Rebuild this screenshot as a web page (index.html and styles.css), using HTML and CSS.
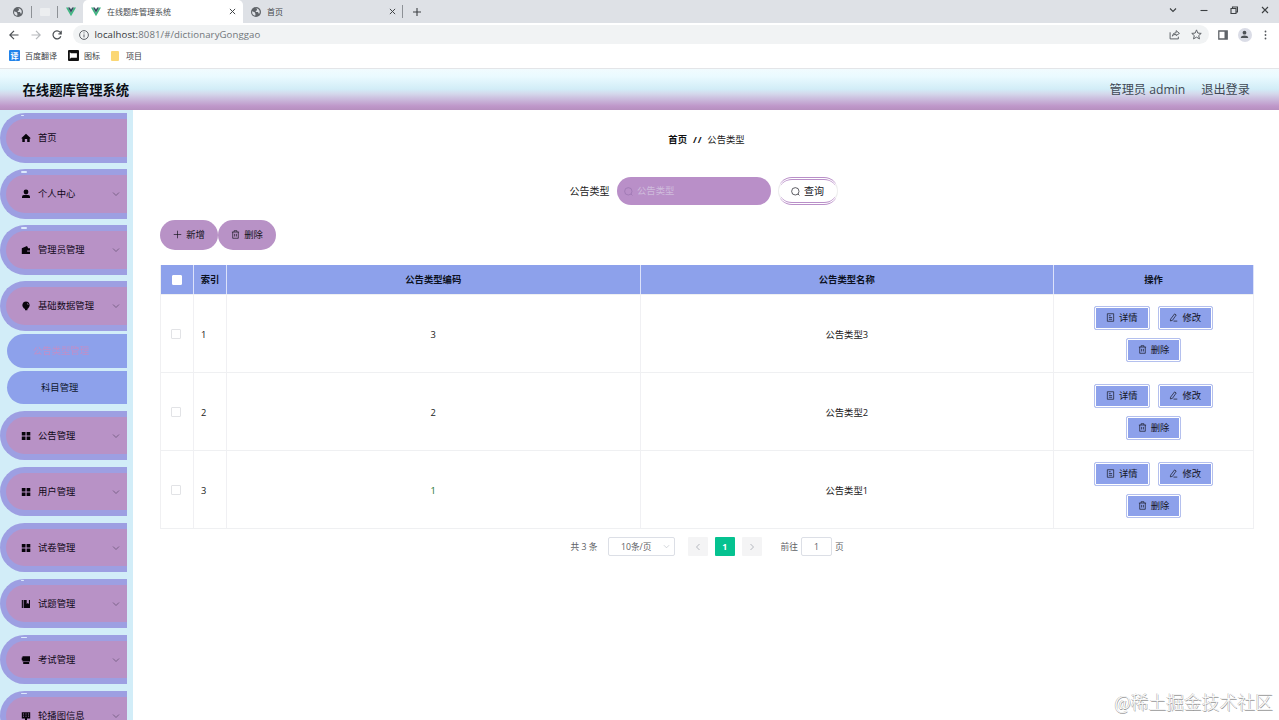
FILE: index.html
```html
<!DOCTYPE html>
<html lang="zh-CN">
<head>
<meta charset="utf-8">
<title>在线题库管理系统</title>
<link rel="stylesheet" href="styles.css">
</head>
<body>
<svg class="defs" width="0" height="0">
  <symbol id="globe" viewBox="0 0 10 10"><circle cx="5" cy="5" r="5" fill="#5f6368"/><path d="M1.2 4.2 3.7 5.2 4.5 6.9 4.2 8.7A3.9 3.9 0 0 1 1.2 4.2M4.5 1.2 6 2 5.8 3.4 4.6 4 5 5 7 5 7.6 6.4 8.4 6.5A4 4 0 0 0 7 1.8Z" fill="#dee1e6"/></symbol>
  <symbol id="vue" viewBox="0 0 10 9"><path d="M0 0h2L5 5.2 8 0h2L5 8.8Z" fill="#41b883"/><path d="M2 0h1.8L5 2 6.2 0H8L5 5.2Z" fill="#35495e"/></symbol>
  <symbol id="cross" viewBox="0 0 8 8"><path d="m1 1 6 6M7 1 1 7"/></symbol>
  <symbol id="down" viewBox="0 0 8 8"><path d="m1 2.5 3 3 3-3"/></symbol>
  <symbol id="house" viewBox="0 0 10 10"><path d="M5 .8 9.5 5v.6H8.7V9H6.2V6H3.8v3H1.3V5.6H.5V5Z" fill="#08040c"/></symbol>
  <symbol id="user" viewBox="0 0 10 10"><circle cx="5" cy="3" r="2.4" fill="#08040c"/><path d="M1 9V7.5Q1 6 2.8 6h4.4Q9 6 9 7.5V9Z" fill="#08040c"/></symbol>
  <symbol id="wallet" viewBox="0 0 10 10"><path d="M.8 3.2 6 1l1.2 2.2H9v2H6.5v1.7H9V9H.8Z" fill="#08040c"/><circle cx="8" cy="6" r=".8" fill="#08040c"/></symbol>
  <symbol id="bulb" viewBox="0 0 10 10"><path d="M5 .6a3.7 3.7 0 0 1 2.3 6.6L6.4 8v1.3H4V8L2.7 7.2A3.7 3.7 0 0 1 5 .6" fill="#08040c"/><path d="M6 2.2q1.2.5 1.2 1.8" fill="none" stroke="#b892c6" stroke-width=".6"/></symbol>
  <symbol id="grid4" viewBox="0 0 10 10"><path d="M.8 1h3.7v3.5H.8zM5.6 1h3.7v3.5H5.6zM.8 5.5h3.7V9H.8zM5.6 5.5h3.7V9H5.6z" fill="#08040c"/></symbol>
  <symbol id="book" viewBox="0 0 10 10"><path d="M.8 1h1.1v8H.8zM2.6 1h3.1v4l1.1-1 1.1 1V1H9v8H2.6z" fill="#08040c"/></symbol>
  <symbol id="cup" viewBox="0 0 10 10"><path d="M1.5 1.2H9v5.3H1.5zM.7 2.4h1v2.8h-1zM2.2 7h6v2h-6z" fill="#08040c"/></symbol>
  <symbol id="film" viewBox="0 0 10 10"><path d="M.8 1.2h8.4v6.3H6v1.4H4V7.5H.8z" fill="#08040c"/><path d="M2 3h1M4.5 3h1M7 3h1M2 5.2h1M4.5 5.2h1M7 5.2h1" stroke="#b892c6" stroke-width=".8"/></symbol>
  <symbol id="search" viewBox="0 0 10 10"><circle cx="4.8" cy="4.8" r="4.1"/><path d="m7.7 7.7 1.7 1.7"/></symbol>
  <symbol id="trash" viewBox="0 0 10 10"><path d="M1 2.3h8M3.4 2.2V.8h3.2v1.4M1.9 2.3v6.9h6.2V2.3M4 4.3v2.9M6 4.3v2.9"/></symbol>
  <symbol id="doc" viewBox="0 0 10 10"><path d="M1.5.8h7v8.4h-7zM3.2 3h2M3.2 5h3.6M3.2 7h3.6"/></symbol>
  <symbol id="edit" viewBox="0 0 10 10"><path d="M6.2 1 8 2.2 3.8 8.2 1.5 8.8 1.8 6.8ZM5 9h4.2"/></symbol>
</svg>

<div class="tabs">
  <span class="pin pin1"><svg class="i10"><use href="#globe"/></svg></span>
  <span class="pin pin2"><i class="blank"></i></span>
  <span class="pin pin3"><svg class="i10"><use href="#vue"/></svg></span>
  <div class="tab active"><svg class="i10"><use href="#vue"/></svg><span>在线题库管理系统</span><svg class="x line"><use href="#cross"/></svg></div>
  <div class="tab"><svg class="i10"><use href="#globe"/></svg><span>首页</span><svg class="x line"><use href="#cross"/></svg></div>
  <i class="sep"></i>
  <svg class="plus line" viewBox="0 0 8 8"><path d="M4 0v8M0 4h8"/></svg>
  <div class="win">
    <svg class="line" viewBox="0 0 8 8"><use href="#down"/></svg>
    <svg class="line" viewBox="0 0 8 8"><path d="M.5 4.5h7"/></svg>
    <svg class="line" viewBox="0 0 8 8"><path d="M1 2.5h5v5H1zM2.5 2.5V1h5v5H6"/></svg>
    <svg class="line" viewBox="0 0 8 8"><use href="#cross"/></svg>
  </div>
</div>
<div class="toolbar">
  <svg class="nav" viewBox="0 0 10 10"><path d="M9.5 5H1M5 .8.8 5 5 9.2"/></svg>
  <svg class="nav dim" viewBox="0 0 10 10"><path d="M.5 5H9M5 .8 9.2 5 5 9.2"/></svg>
  <svg class="nav" viewBox="0 0 10 10"><path d="M8.8 6.2A4 4 0 1 1 8 2.2L9 3.4M9.2.8v3H6.4"/></svg>
  <div class="address">
    <svg class="info" viewBox="0 0 10 10"><circle cx="5" cy="5" r="4.4"/><path d="M5 4.4v3M5 2.4v1"/></svg>
    <span class="url"><b>localhost:</b>8081/#/dictionaryGonggao</span>
    <svg class="addricon share" viewBox="0 0 10 10"><path d="M1 3v6h7.5V7M3 6.5Q3.5 3.3 6.5 3.3V1.5L9.5 4 6.5 6V4.8Q4 4.8 3 6.5Z"/></svg>
    <svg class="addricon" viewBox="0 0 10 10"><path d="m5 .8 1.2 2.9 3.1.3L7 6l.7 3L5 7.4 2.3 9 3 6 .7 4l3.1-.3Z"/></svg>
  </div>
  <svg class="panel" viewBox="0 0 10 10"><path d="M.8 1h8.4v8H.8z" fill="none" stroke="#5f6368" stroke-width="1.3"/><path d="M6.5 1h2.7v8H6.5z" fill="#5f6368"/></svg>
  <span class="avatar"><svg viewBox="0 0 10 10"><circle cx="5" cy="3" r="2.1"/><path d="M1 9V7.8Q1.5 6 5 6t4 1.8V9Z"/></svg></span>
  <svg class="dots" viewBox="0 0 3 10"><circle cx="1.5" cy="1.5" r=".9"/><circle cx="1.5" cy="5" r=".9"/><circle cx="1.5" cy="8.5" r=".9"/></svg>
</div>
<div class="bookmarks">
  <span class="bm"><i class="yi">译</i>百度翻译</span>
  <span class="bm"><svg class="bmi" viewBox="0 0 11 11"><rect width="11" height="11" rx="1" fill="#111"/><path d="M1.8 2.2 3 3.2h5.9v4.6H3L1.8 9Z" fill="#fff"/></svg>图标</span>
  <span class="bm"><i class="folder"></i>项目</span>
</div>

<header class="header">
  <h1>在线题库管理系统</h1>
  <span class="who">管理员 admin</span>
  <span>退出登录</span>
</header>

<div class="body">
  <nav class="side">
    <div class="item tick small"><svg><use href="#house"/></svg><span>首页</span></div>
    <div class="item tick"><svg><use href="#user"/></svg><span>个人中心</span><svg class="arr"><use href="#down"/></svg></div>
    <div class="item tick"><svg><use href="#wallet"/></svg><span>管理员管理</span><svg class="arr"><use href="#down"/></svg></div>
    <div class="item"><svg><use href="#bulb"/></svg><span>基础数据管理</span><svg class="arr"><use href="#down"/></svg></div>
    <div class="subs">
      <div class="sub current">公告类型管理</div>
      <div class="sub">科目管理</div>
    </div>
    <div class="item"><svg><use href="#grid4"/></svg><span>公告管理</span><svg class="arr"><use href="#down"/></svg></div>
    <div class="item"><svg><use href="#grid4"/></svg><span>用户管理</span><svg class="arr"><use href="#down"/></svg></div>
    <div class="item"><svg><use href="#grid4"/></svg><span>试卷管理</span><svg class="arr"><use href="#down"/></svg></div>
    <div class="item tick small"><svg><use href="#book"/></svg><span>试题管理</span><svg class="arr"><use href="#down"/></svg></div>
    <div class="item tick"><svg><use href="#cup"/></svg><span>考试管理</span><svg class="arr"><use href="#down"/></svg></div>
    <div class="item tick"><svg><use href="#film"/></svg><span>轮播图信息</span><svg class="arr"><use href="#down"/></svg></div>
  </nav>

  <main class="main">
    <div class="crumb"><b>首页</b><b class="slash">//</b><span>公告类型</span></div>
    <div class="filter">
      <label>公告类型</label>
      <div class="field"><svg class="ico"><use href="#search"/></svg>公告类型</div>
      <button class="query"><svg class="ico"><use href="#search"/></svg>查询</button>
    </div>
    <div class="actions">
      <button class="pill"><svg class="ico" viewBox="0 0 10 10"><path d="M5 .8v8.4M.8 5h8.4"/></svg>新增</button>
      <button class="pill"><svg class="ico"><use href="#trash"/></svg>删除</button>
    </div>
    <div class="table">
      <div class="row head"><div class="c"><i class="box"></i></div><div class="c">索引</div><div class="c">公告类型编码</div><div class="c">公告类型名称</div><div class="c">操作</div></div>
      <div class="row"><div class="c"><i class="box"></i></div><div class="c idx">1</div><div class="c">3</div><div class="c">公告类型3</div>
        <div class="c ops"><button><svg class="ico"><use href="#doc"/></svg>详情</button><button><svg class="ico"><use href="#edit"/></svg>修改</button><button><svg class="ico"><use href="#trash"/></svg>删除</button></div></div>
      <div class="row"><div class="c"><i class="box"></i></div><div class="c idx">2</div><div class="c">2</div><div class="c">公告类型2</div>
        <div class="c ops"><button><svg class="ico"><use href="#doc"/></svg>详情</button><button><svg class="ico"><use href="#edit"/></svg>修改</button><button><svg class="ico"><use href="#trash"/></svg>删除</button></div></div>
      <div class="row"><div class="c"><i class="box"></i></div><div class="c idx">3</div><div class="c green">1</div><div class="c">公告类型1</div>
        <div class="c ops"><button><svg class="ico"><use href="#doc"/></svg>详情</button><button><svg class="ico"><use href="#edit"/></svg>修改</button><button><svg class="ico"><use href="#trash"/></svg>删除</button></div></div>
    </div>
    <div class="pager">
      <span class="total">共 3 条</span>
      <span class="size">10条/页<svg class="arr"><use href="#down"/></svg></span>
      <span class="pg prev"><svg viewBox="0 0 8 8"><path d="M5.5 1 2.5 4l3 3"/></svg></span>
      <span class="pg on">1</span>
      <span class="pg"><svg viewBox="0 0 8 8"><path d="m2.5 1 3 3-3 3"/></svg></span>
      <span class="goto">前往</span><span class="num">1</span><span>页</span>
    </div>
  </main>
</div>
<div class="watermark">@稀土掘金技术社区</div>
</body>
</html>
```
FILE: styles.css
```css
* { box-sizing: border-box; }
body { margin: 0; width: 1279px; height: 720px; overflow: hidden; position: relative; background: #fff; color: #222; font: 9.33px/14px "Open Sans", "Noto Sans CJK SC", sans-serif; }
svg { flex: none; }
i { font-style: normal; }
button { font: inherit; color: #14141c; border: 0; margin: 0; padding: 0; display: flex; align-items: center; justify-content: center; }
.defs { position: absolute; }
.line { fill: none; stroke: #3c4043; stroke-width: 1.1; }

/* Browser chrome */
.tabs { height: 23px; background: #dee1e6; display: flex; align-items: center; font-size: 8px; color: #45494d; }
.i10 { width: 10px; height: 10px; }
.pin { display: flex; align-items: center; height: 12px; }
.pin1 { width: 32px; padding-left: 13px; border-right: 1px solid #8d9196; }
.pin2 { width: 26px; padding-left: 8px; border-right: 1px solid #8d9196; }
.pin3 { width: 25px; padding-left: 8px; }
.blank { width: 10px; height: 8px; background: #eceef0; border-radius: 1px; }
.tab { width: 160px; height: 23px; padding: 0 7px 0 8px; display: flex; align-items: center; gap: 6px; }
.tab.active { background: #fff; border-radius: 5px 5px 0 0; }
.tab .x { width: 7px; height: 7px; margin-left: auto; }
.sep { width: 1px; height: 13px; margin-left: -1px; background: #8d9196; }
.plus { width: 8px; height: 8px; margin-left: 10px; }
.win { margin-left: auto; display: flex; gap: 22.7px; padding: 0 10px 4px 0; }
.win svg { width: 8px; height: 8px; }
.toolbar { height: 23px; display: flex; align-items: center; padding-left: 9px; background: #fff; }
.nav { width: 10px; height: 10px; margin-right: 11.5px; fill: none; stroke: #4a4e52; stroke-width: 1.2; }
.nav.dim { stroke: #b5b8bb; }
.address { width: 1136px; height: 19px; margin-left: -1px; background: #f1f3f4; border-radius: 10px; display: flex; align-items: center; padding: 0 7px 0 6px; }
.info { width: 10px; height: 10px; fill: none; stroke: #5f6368; stroke-width: 1; margin-right: 6px; }
.url { font-size: 9.6px; letter-spacing: .1px; color: #70757a; margin-right: auto; }
.url b { font-weight: 400; color: #33363a; }
.addricon { width: 11px; height: 11px; fill: none; stroke: #5f6368; stroke-width: .9; }
.share { margin-right: 11px; }
.panel { width: 10px; height: 10px; margin-left: 9px; }
.avatar { width: 14px; height: 14px; border-radius: 50%; background: #dadce6; margin-left: 10px; display: flex; align-items: center; justify-content: center; }
.avatar svg { width: 9px; height: 9px; fill: #4d5156; }
.dots { width: 3px; height: 10px; fill: #55595e; margin-left: 12.5px; }
.bookmarks { height: 23px; padding: 0 0 3px 9px; display: flex; align-items: center; gap: 10px; border-bottom: 1px solid #e3e5e8; font-size: 8px; color: #3c4043; }
.bm { display: flex; align-items: center; gap: 5px; }
.yi { width: 11px; height: 11px; background: #2283ea; color: #fff; border-radius: 1px; line-height: 11px; font-size: 8px; font-weight: 700; text-align: center; }
.bmi { width: 11px; height: 11px; margin-left: 1px; }
.folder { width: 8px; height: 10px; background: #fbd775; border-radius: 1px; margin: 0 2px 0 1px; }

/* Application header */
.header { height: 41px; display: flex; align-items: center; padding: 1px 29px 0 22.5px; background: linear-gradient(#f1fbfe 0%, #eafaff 18%, #d2edf7 49%, #d4d9ec 60%, #bf98ca 90%, #b68fbf 100%); font-size: 12.2px; color: #3f4854; }
.header h1 { margin: 0 auto 0 0; font: 700 13.33px/20px "Open Sans", "Noto Sans CJK SC", sans-serif; color: #0a0e14; }
.who { margin-right: 16px; }

.body { display: flex; height: 610px; }
.side { width: 133px; height: 610px; overflow: hidden; padding-top: 3.3px; background: #d2edf8; flex: none; }
.item { position: relative; width: 127px; height: 49.4px; margin-bottom: 6.6px; border: 6px solid #9d9fe2; border-right: 0; border-radius: 25px 0 0 25px; background: #b892c6; display: flex; align-items: center; padding-left: 15px; color: #100818; }
.item svg { width: 10px; height: 10px; margin-right: 7px; }
.item .arr { width: 8px; height: 8px; margin: 0 7px 0 auto; }
.arr { fill: none; stroke: #695578; stroke-width: .8; }
.tick::before { content: ""; position: absolute; left: 15px; top: -4px; width: 6px; height: 1.5px; background: #dce9fb; border-radius: 1px; }
.small::before { top: -4.5px; width: 3px; height: 1px; }
.subs { margin: -3px 0 6.6px 7px; display: flex; flex-direction: column; gap: 3.4px; }
.sub { width: 120px; height: 33.4px; border-radius: 17px 0 0 17px; background: #8da1eb; padding-left: 34px; line-height: 33px; color: #101830; }
.current { padding-left: 26px; color: #c08fc8; filter: blur(.6px); }

.main { flex: 1; padding: 23px 26px 0 27px; }
.crumb { display: flex; justify-content: center; gap: 6px; color: #222; padding-right: 1px; }
.crumb b { color: #111; }
.slash { letter-spacing: .8px; margin-right: -1px; }
.filter { height: 28px; margin-top: 30px; margin-left: 409.5px; display: flex; align-items: center; }
.filter label { width: 47.5px; font-size: 10px; }
.field { width: 154px; height: 28px; border-radius: 14px; background: #b98fc8; display: flex; align-items: center; padding-left: 7px; color: #cfbcdc; }
.ico { width: 9px; height: 9px; margin-right: 4px; fill: none; stroke: currentColor; stroke-width: .75; }
.field .ico { stroke: #9873ae; }
.query { width: 60px; height: 28px; margin-left: 6.5px; border-radius: 14px; background: #fff; border: 3px double #b98fc8; border-left: 1px solid #eee; border-right: 1px solid #eee; font-size: 10px; }
.actions { display: flex; margin-top: 14.5px; }
.pill { width: 58px; height: 30.5px; border-radius: 15px; background: #b892c6; }
.table { margin-top: 15px; width: 1094px; border-left: 1px solid #f0f0f2; }
.row { display: grid; grid-template-columns: 33px 33px 413.5px 413.5px 200px; height: 78px; border-bottom: 1px solid #eff0f2; }
.c { display: flex; align-items: center; justify-content: center; border-right: 1px solid #f0f0f3; padding-top: 2px; }
.head { height: 30px; background: #8da1eb; font-weight: 700; color: #0b1020; }
.head .c { border-color: #dce2fa; padding-top: 0; }
.box { width: 10px; height: 10px; border: 1px solid #e2e3e6; border-radius: 1px; background: #fff; margin: 0 2px 1px 0; }
.head .box { margin: 0; border-color: #fff; }
.idx { justify-content: flex-start; padding-left: 7px; }
.green { color: #23762b; }
.ops { flex-wrap: wrap; gap: 8px; align-content: center; padding: 0 30px; }
.ops button { width: 55.5px; height: 24px; border: 1px solid #b4c0ee; border-radius: 2px; box-shadow: inset 0 0 0 1px #fff; background: #8da1eb; }
.pager { display: flex; align-items: center; height: 20px; margin-top: 7.5px; padding-left: 410.5px; color: #606266; font-size: 8.7px; }
.total { width: 37.5px; }
.size { width: 67px; height: 19px; border: 1px solid #dcdfe6; border-radius: 2px; display: flex; align-items: center; padding-left: 12px; }
.size .arr { width: 7px; height: 7px; margin: 0 4px 0 auto; stroke: #bfc3ca; }
.pg { width: 20.5px; height: 19px; background: #f4f4f5; border-radius: 1px; margin-right: 6.5px; display: flex; align-items: center; justify-content: center; }
.pg svg { width: 8px; height: 8px; fill: none; stroke: #b5b8bf; stroke-width: 1; }
.prev { margin-left: 12.5px; }
.pg.on { background: #05c290; color: #fff; font-weight: 700; }
.goto { margin-left: 12px; }
.num { width: 31px; height: 19px; border: 1px solid #dcdfe6; border-radius: 2px; text-align: center; line-height: 18px; margin: 0 3px; }
.watermark { position: absolute; right: 6px; top: 691px; font: 300 17.8px/24px "Liberation Serif", "Noto Sans CJK SC", serif; color: #fff; text-shadow: -.5px 0 #aaa, .5px .5px #999; white-space: nowrap; }
```
